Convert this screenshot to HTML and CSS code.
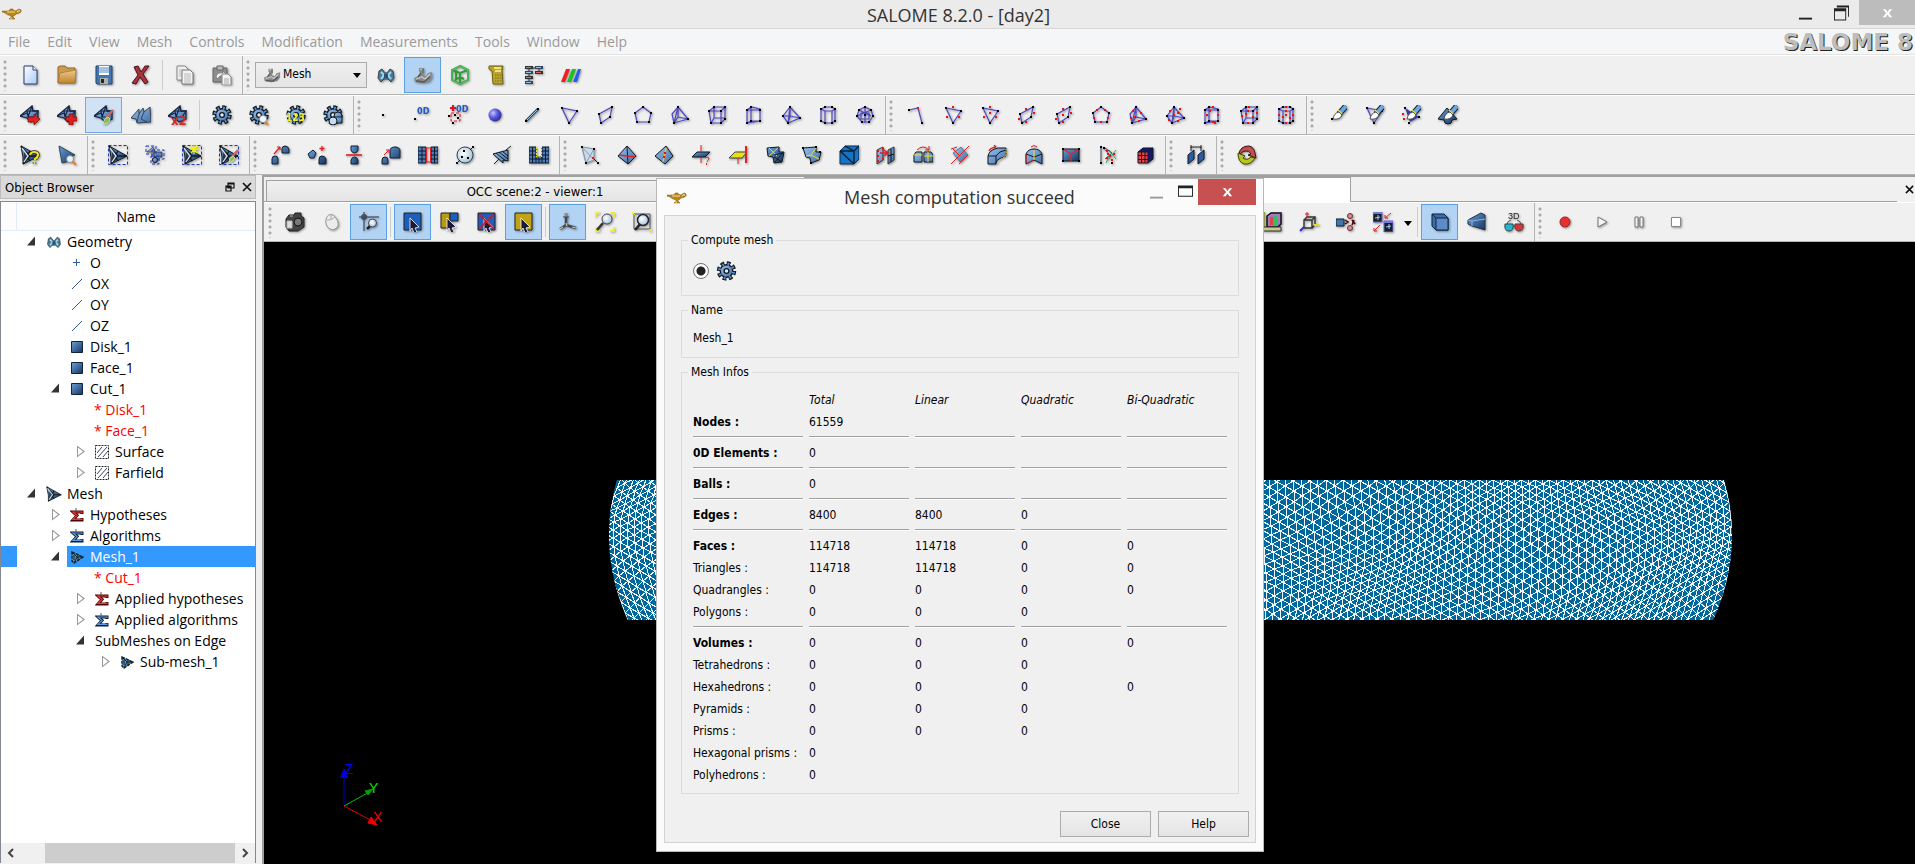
FILE: index.html
```html
<!DOCTYPE html>
<html lang="en">
<head>
<meta charset="utf-8">
<title>SALOME 8.2.0 - [day2]</title>
<link rel="stylesheet" href="styles.css">
</head>
<body>
<svg class="defs" aria-hidden="true">
  <defs>
    <linearGradient id="steel" x1="0" y1="0" x2="1" y2="1"><stop offset="0" stop-color="#9cc2ee"/><stop offset="1" stop-color="#3f6ea8"/></linearGradient>
    <linearGradient id="deep" x1="0" y1="0" x2="1" y2="1"><stop offset="0" stop-color="#6ba0dc"/><stop offset="1" stop-color="#16345c"/></linearGradient>
    <linearGradient id="paper" x1="0" y1="0" x2="1" y2="1"><stop offset="0" stop-color="#fff"/><stop offset="1" stop-color="#a9c9f7"/></linearGradient>
    <linearGradient id="wood" x1="0" y1="0" x2="0" y2="1"><stop offset="0" stop-color="#f0c88a"/><stop offset="1" stop-color="#c08430"/></linearGradient>
    <radialGradient id="orb" cx=".35" cy=".35" r=".7"><stop offset="0" stop-color="#c8c8ff"/><stop offset=".5" stop-color="#5a5ae0"/><stop offset="1" stop-color="#2a2a90"/></radialGradient>
    <radialGradient id="glass" cx=".4" cy=".4" r=".6"><stop offset="0" stop-color="#fff"/><stop offset="1" stop-color="#a8c8d8"/></radialGradient>
  </defs>
  <symbol id="lamp" viewBox="0 0 20 12"><path d="M0 3h5q2 0 3-1V1h3v1l3 1q2-2 4-2 2 1 1 3-2 2-5 2-1 2-3 2v1l2 2H7l2-2V8Q5 7 3 5L0 4z" fill="#b8841c" stroke="#7c5a14" stroke-width=".5"/><path d="M5 4h8M9 9v2" stroke="#ffe28a"/><path d="M15 4q2-2 3-1" stroke="#f4f0dc" fill="none"/></symbol>
  <symbol id="new" viewBox="0 0 20 20"><path d="M4 1h9l4 4v14H4z" fill="url(#paper)" stroke="#24406e"/><path d="M13 1v4h4" fill="#fff" stroke="#24406e"/></symbol>
  <symbol id="open" viewBox="0 0 20 20"><path d="M1 2l2-1h5l2 2h8v15H1z" fill="#c99a52" stroke="#9b6a22"/><path d="M3 8l16-3-1 13H1z" fill="url(#wood)" stroke="#a67328" stroke-width=".7"/></symbol>
  <symbol id="save" viewBox="0 0 20 20"><path d="M2 1h16v18H3l-1-1z" fill="#4375ae" stroke="#23466f"/><path d="M5 1h10v9H5z" fill="#fff"/><path d="M5 3h10M5 5h10M5 7h10" stroke="#4a83c6"/><path d="M6 13h8v6H6z" fill="#b5b0a0"/><path d="M7 14h3v4H7z" fill="#222"/></symbol>
  <symbol id="del" viewBox="0 0 20 20"><path d="M3 2l4-1 3 6 4-6h4l-6 8 5 8-3 2-5-7-4 7-4-1 6-8z" fill="#a8323e" stroke="#4d1016"/></symbol>
  <symbol id="copy" viewBox="0 0 20 20"><path d="M2 1h8l3 3v11H2z" fill="#eee" stroke="#888"/><path d="M7 5h8l3 3v11H7z" fill="#f4f4f4" stroke="#777"/><path d="M9 9h7M9 11h7M9 13h7M9 15h7M9 17h7M4 5h3M4 7h3M4 9h3M4 11h3" stroke="#aaa" stroke-width=".8"/></symbol>
  <symbol id="paste" viewBox="0 0 20 20"><path d="M1 3h14v14H1z" fill="#8c8c8c" stroke="#666"/><path d="M5 1h6v4H5z" fill="#bbb" stroke="#666"/><path d="M4 12q1-5 7-4V6l4 4-4 4v-3q-4-1-5 3z" fill="#eee" stroke="#666" stroke-width=".6"/><path d="M10 9h6l3 3v8h-9z" fill="#f2f2f2" stroke="#888"/><path d="M12 14h5M12 16h5M12 18h5" stroke="#aaa"/></symbol>
  <symbol id="mod" viewBox="0 0 20 20"><path d="M6 3h5v4l-1 3 3 1 2-3 4-1v6l-3 4-7 1-7-1-1-4 4-2 3-2-2-3z" fill="#8a8a8a"/><path d="M7 4l3 1v3M3 14l6-2 3 2 5-5" stroke="#c8c8c8" stroke-width="1.300" fill="none"/><path d="M8 8l-3 4M10 4v4M3 16l8 1 6-5" stroke="#555" stroke-width="1.300" fill="none"/></symbol>
  <symbol id="geo" viewBox="0 0 20 20"><path d="M3 6l3-2 3 4h2l3-4 3 2 1 7-3 4-3-3H8l-3 3-3-4z" fill="#477c9c" stroke="#444"/><path d="M5 7l3 3-3 4M15 7l-3 3 3 4" stroke="#9fd8ec" stroke-width="2" fill="none"/><path d="M8 9h4v4H8z" fill="#28507a"/></symbol>
  <symbol id="cube" viewBox="0 0 20 20"><path d="M10 1l8 4v10l-8 4-8-4V5zM2 5l8 3 8-3M10 8v11M5 15l5-3 4 2M6 5v10" fill="none" stroke="#2f9c3a" stroke-width="2"/><path d="M10 1l8 4v10l-8 4-8-4V5z" fill="none" stroke="#7ad884" stroke-width=".7"/></symbol>
  <symbol id="calc" viewBox="0 0 20 20"><path d="M2 1h14l-1 4 1 14H6L5 6 2 4z" fill="#b9a52c" stroke="#6e6012"/><path d="M7 3h7M8 6h6" stroke="#f3e27a" stroke-width="2"/><path d="M8 10h7M8 13h7M8 16h7" stroke="#7a6a18" stroke-dasharray="1.500 1"/></symbol>
  <symbol id="flow" viewBox="0 0 20 20"><path d="M7 3h5M5 4v14M15 4v5" stroke="#333"/><path d="M1 1h8v3H1zM11 6h8v3h-8zM1 11h8v3H1z" fill="#333" /><path d="M11 1h8v3h-8zM1 6h8v3H1zM1 16h8v3H1z" fill="#2f4866"/><path d="M2 2.500h5M12 7.500h5M2 12.500h5" stroke="#d66"/><path d="M12 2.500h5M2 7.500h5M2 17.500h5" stroke="#8cc4f0"/></symbol>
  <symbol id="rgb" viewBox="0 0 20 20"><path d="M0 17L5 4h4L4 17z" fill="#f02020"/><path d="M6 17l5-13h4l-5 13z" fill="#20c020"/><path d="M12 17l5-13h3l-4 13z" fill="#2060f0"/></symbol>
  <symbol id="base" viewBox="0 0 20 20"><path d="M0 11L12 1l1 5h5v8l-7 3-4-4z" fill="url(#steel)" stroke="#142440" stroke-width="1.300"/><path d="M7 6h11l-4 6H8zM0 11l7-3M12 1L8 12" fill="none" stroke="#142440" stroke-width="1.200"/></symbol>
  <symbol id="m1" viewBox="0 0 20 20"><use href="#base"/><path d="M8 12h6V9l6 5-6 6v-3H8z" fill="#e02020" stroke="#701010" stroke-width=".7"/></symbol>
  <symbol id="m2" viewBox="0 0 20 20"><use href="#base"/><path d="M12 9h4v3h4v4h-4v4h-4v-4H9v-4h3z" fill="#e02020" stroke="#701010" stroke-width=".7"/></symbol>
  <symbol id="m3" viewBox="0 0 20 20"><use href="#base"/><path d="M19 5l-7 8" stroke="#c86464" stroke-width="2.500"/><path d="M14 12q-4 1-5 7 6 0 7-5z" fill="#8cbc48" stroke="#dfe8b8" stroke-width=".8"/></symbol>
  <symbol id="m4" viewBox="0 0 20 20"><path d="M0 13l8-9v5l4-6 1 4 6-5 1 15-14 1-1-4z" fill="url(#steel)" stroke="#345"/><path d="M8 9l-2 8M13 7l-3 7 6 3" fill="none" stroke="#345"/></symbol>
  <symbol id="gear" viewBox="0 0 20 20"><circle cx="10" cy="10" r="7.500" fill="none" stroke="#101820" stroke-width="4.500" stroke-dasharray="3.600 2.290"/><circle cx="10" cy="10" r="6.300" fill="url(#steel)" stroke="#101820" stroke-width="1.400"/><circle cx="10" cy="10" r="7" fill="none" stroke="#5d91cc" stroke-width="3" stroke-dasharray="1.600 3.898" stroke-dashoffset="-.9"/><circle cx="10" cy="10" r="2.400" fill="#e8e8e8" stroke="#101820" stroke-width="1.300"/></symbol>
  <symbol id="g2" viewBox="0 0 20 20"><use href="#gear"/><path d="M15 16l4 4" stroke="#e08030" stroke-width="2"/><circle cx="14" cy="14" r="3.500" fill="#f2f8ff" stroke="#888" stroke-width=".6"/></symbol>
  <symbol id="g4" viewBox="0 0 20 20"><use href="#gear"/><circle cx="15" cy="11" r="4" fill="url(#steel)" stroke="#101820"/><path d="M11 12h8v6h-8z" fill="url(#steel)" stroke="#101820"/><circle cx="10" cy="16" r="4" fill="#c4dcf6" stroke="#101820"/></symbol>
  <symbol id="w0" viewBox="0 0 20 20"><path class="k" d="M9 10h0"/></symbol>
  <symbol id="w3" viewBox="0 0 20 20"><circle cx="10" cy="10" r="6.500" fill="url(#orb)"/></symbol>
  <symbol id="w4" viewBox="0 0 20 20"><path d="M4 16L16 4" stroke="#345" stroke-width="2.500"/><path d="M4 16L16 4" stroke="#9cf"/><path class="k" d="M4 16h0M16 4h0"/></symbol>
  <symbol id="w5" viewBox="0 0 20 20"><path class="w" d="M3 3l15 3-8 12z"/><path class="k" d="M3 3h0M18 6h0M10 18h0"/></symbol>
  <symbol id="w6" viewBox="0 0 20 20"><path class="w" d="M3 9l13-7-2 10-9 6z"/><path class="k" d="M3 9h0M16 2h0M14 12h0M5 18h0"/></symbol>
  <symbol id="w7" viewBox="0 0 20 20"><path class="w" d="M10 2l8 6-2 9H4L2 8z"/><path class="k" d="M10 2h0M18 8h0M16 17h0M4 17h0M2 8h0"/></symbol>
  <symbol id="w8" viewBox="0 0 20 20"><path class="w" d="M8 2l10 12L4 18zM4 18L2 9l6-7v10l10 2M4 18l4-6"/><path class="k" d="M8 2h0M18 14h0M4 18h0"/></symbol>
  <symbol id="w9" viewBox="0 0 20 20"><path class="w" d="M2 6h12v12H4zM2 6l5-4h11l-4 4M18 2v12l-4 4M7 2v11l-3 5M7 13h11"/><path class="k" d="M2 6h0M14 6h0M14 18h0M4 18h0M7 2h0M18 2h0M18 14h0"/></symbol>
  <symbol id="w10" viewBox="0 0 20 20"><path class="w" d="M3 5l4-3 9 2v12H7l-4 2zM7 2v14M3 5h13M3 18l13-2"/><path class="k" d="M3 5h0M7 2h0M16 5h0M16 16h0M7 16h0M3 18h0"/></symbol>
  <symbol id="w11" viewBox="0 0 20 20"><path class="w" d="M9 2L2 11l5 7 12-5zM9 2v9M2 11l7 0 10 2M7 18l2-7M9 2l-2 16"/><path class="k" d="M9 2h0M2 11h0M7 18h0M19 13h0"/></symbol>
  <symbol id="w12" viewBox="0 0 20 20"><path class="w" d="M3 4l4-2h7l3 2v12l-3 2H7l-4-2zM7 6h7v12H7zM3 4l4 2M17 4l-3 2"/><path class="k" d="M3 4h0M7 2h0M14 2h0M17 4h0M3 16h0M7 18h0M14 18h0M17 16h0"/></symbol>
  <symbol id="w13" viewBox="0 0 20 20"><path class="w" d="M10 2l6 3 2 6-4 6H7l-5-6 2-6zM10 2v16M4 5l12 6M16 5L2 11M6 8h8v6H6z"/><path class="k" d="M10 2h0M16 5h0M18 11h0M14 17h0M7 17h0M2 11h0M4 5h0M10 10h0"/></symbol>
  <symbol id="q0" viewBox="0 0 20 20"><path class="w" d="M3 5l9-2 4 15"/><path class="k" d="M3 5h0M16 18h0"/><path class="r" d="M12 3h0"/></symbol>
  <symbol id="q1" viewBox="0 0 20 20"><use href="#w5"/><path class="r" d="M10 2h0M16 12h0M4 12h0"/></symbol>
  <symbol id="q2" viewBox="0 0 20 20"><use href="#w5"/><path class="r" d="M10 2h0M16 12h0M4 12h0M10 8h0"/></symbol>
  <symbol id="q3" viewBox="0 0 20 20"><use href="#w6"/><path class="r" d="M9 4h0M17 8h0M9 17h0M2 14h0"/></symbol>
  <symbol id="q4" viewBox="0 0 20 20"><use href="#w6"/><path class="r" d="M9 4h0M17 8h0M9 17h0M2 14h0M9 10h0"/></symbol>
  <symbol id="q5" viewBox="0 0 20 20"><use href="#w7"/><path class="r" d="M14 5h0M17 13h0M10 17h0M3 13h0M6 5h0"/></symbol>
  <symbol id="q6" viewBox="0 0 20 20"><use href="#w8"/><path class="r" d="M5 6h0M13 8h0M11 16h0M3 13h0M7 12h0"/></symbol>
  <symbol id="q7" viewBox="0 0 20 20"><use href="#w11"/><path class="r" d="M5 6h0M13 8h0M13 16h0M4 15h0M9 10h0M15 4h0"/></symbol>
  <symbol id="q8" viewBox="0 0 20 20"><use href="#w10"/><path class="r" d="M11 2h0M5 10h0M16 10h0M11 17h0M8 6h0M13 18h0"/></symbol>
  <symbol id="q9" viewBox="0 0 20 20"><use href="#w9"/><path class="r" d="M10 2h0M3 11h0M9 6h0M18 8h0M9 18h0M14 12h0M7 9h0"/></symbol>
  <symbol id="q10" viewBox="0 0 20 20"><use href="#w12"/><path class="r" d="M10 2h0M3 10h0M17 10h0M10 18h0M10 6h0M7 12h0M14 13h0M10 10h0"/></symbol>
  <symbol id="brush" viewBox="0 0 20 20"><path d="M19 1l-7 8" stroke="#10243c" stroke-width="6"/><path d="M19 1l-7 8" stroke="#6ea6e0" stroke-width="4"/><path d="M11 5l4 4" stroke="#e0e040" stroke-width="1.500"/><path d="M6 14q1-6 6-7l3 3q-2 5-9 4z" fill="#fff" stroke="#333" stroke-width=".8"/></symbol>
  <symbol id="b0" viewBox="0 0 20 20"><use href="#brush"/><path class="k" d="M5 14h0"/></symbol>
  <symbol id="b1" viewBox="0 0 20 20"><use href="#w5"/><use href="#brush"/></symbol>
  <symbol id="b2" viewBox="0 0 20 20"><path d="M4 3l14 9-9 5z" fill="#3c3ca8"/><use href="#brush"/><path class="k" d="M4 3h0M18 12h0M8 18h0"/><path class="r" d="M2 9h0M3 14h0"/></symbol>
  <symbol id="b3" viewBox="0 0 20 20"><path d="M0 14l9-11 10 11-5 1q0 4-4 4t-4-4z" fill="url(#deep)" stroke="#101820"/><use href="#brush"/></symbol>
  <symbol id="arrow" viewBox="0 0 20 20"><path d="M1 1l18 10-16 8V12z" fill="url(#deep)" stroke="#101820"/><path d="M1 1l9 10-7 8M10 11h9M5 7v9M10 6l-3 5 3 5" fill="none" stroke="#101820" stroke-width="1.300"/><path d="M2 3l6 8-4 6" stroke="#ddd" stroke-width="1.300" fill="none"/></symbol>
  <symbol id="a1" viewBox="0 0 20 20"><use href="#arrow"/><path d="M10 10q1-3 4-3 4 0 4 3 0 2-3 4v1M14.500 17v2" fill="none" stroke="#222" stroke-width="3.500"/><path d="M10 10q1-3 4-3 4 0 4 3 0 2-3 4v1M14.500 17v2" fill="none" stroke="#f0e020" stroke-width="2.200"/></symbol>
  <symbol id="a2" viewBox="0 0 20 20"><path d="M2 1l16 9-6 2 1 4-8 2z" fill="url(#deep)" stroke="#345"/><path d="M15 16l4 4" stroke="#e08030" stroke-width="2"/><circle cx="13" cy="14" r="3.500" fill="#e6f2fc" stroke="#777" stroke-width=".7"/></symbol>
  <symbol id="s1" viewBox="0 0 20 20"><path class="sel b1" d="M.5.5h19v19H.5z"/><use href="#arrow"/></symbol>
  <symbol id="s2" viewBox="0 0 20 20"><path d="M2 7l6-5 2 5zM9 7h8v5H9z" fill="url(#steel)" stroke="#112" stroke-width=".6"/><path class="sel b1" d="M1 1h10v8H1zM7 5h12v9H7zM6 11h8v8H6z"/><circle cx="10" cy="15" r="2.500" fill="url(#steel)" stroke="#111"/></symbol>
  <symbol id="s3" viewBox="0 0 20 20"><use href="#s1"/><path d="M12 0v9M8 4h9M9 1l6 7M15 1l-6 7" stroke="#f0f020" stroke-width="1.300"/></symbol>
  <symbol id="s4" viewBox="0 0 20 20"><use href="#s1"/><path d="M19 5l-7 8" stroke="#c86464" stroke-width="2.500"/><path d="M14 11q-4 1-4 6 5 0 6-4z" fill="#8cbc48" stroke="#dfe8b8" stroke-width=".8"/></symbol>
  <symbol id="t1" viewBox="0 0 20 20"><path d="M2 19v-5q0-3 3-3t3 3v5zM12 8V4q0-3 3-3t4 3v4z" fill="url(#deep)" stroke="#0e2038"/><path d="M4 9l6-7M10 2H7M10 2v3" stroke="#e02020" stroke-width="1.200"/></symbol>
  <symbol id="t2" viewBox="0 0 20 20"><path d="M1 9l5-4 3 3-2 5H3zM12 19v-5q0-3 3-3t4 3v5z" fill="url(#deep)" stroke="#0e2038"/><path d="M15 1v5M12.500 3.500h5" stroke="#e02020" stroke-width="1.300"/></symbol>
  <symbol id="t3" viewBox="0 0 20 20"><path d="M7 1h7v4q-1 3-3.500 3T7 5zM7 19v-4q1-3 3.500-3t3.500 3v4z" fill="url(#deep)" stroke="#0e2038"/><path d="M2 10h16" stroke="#e02020" stroke-width="1.600"/></symbol>
  <symbol id="t4" viewBox="0 0 20 20"><path d="M1 19v-4q0-3 3-3t3 3v4zM9 13V6q0-4 5-4t5 4v7z" fill="url(#deep)" stroke="#0e2038"/><path d="M3 10l5-5M8 5H5M8 5v3" stroke="#e02020"/></symbol>
  <symbol id="t5" viewBox="0 0 20 20"><path d="M0 2h8v16H0zM13 2h7v16h-7z" fill="#4d7db8"/><path class="gridl" d="M0 2h8v16H0zM13 2h7v16h-7zM0 6h8M0 10h8M0 14h8M13 6h7M13 10h7M13 14h7M4 2v16M16.500 2v16"/><path d="M8 3h5M8 17h5M8.500 3v14M12.500 3v14" stroke="#e02020"/></symbol>
  <symbol id="t6" viewBox="0 0 20 20"><circle cx="10" cy="10" r="8" fill="url(#glass)" stroke="#345"/><path class="k" d="M9 6h0M7 12h0M13 13h0M18 2h0M2 18h0"/><path d="M15 5l4-4M1 19l4-4" stroke="#111"/></symbol>
  <symbol id="t7" viewBox="0 0 20 20"><path d="M1 9l15-4v11l-5-1v3z" fill="url(#steel)" stroke="#101820"/><path d="M4 8l10 8M7 7l9 7M10 6l6 5M14 5l5-4M2 19l5-5" stroke="#101820"/></symbol>
  <symbol id="t8" viewBox="0 0 20 20"><path d="M0 2h7v10h6V2h7v16H0z" fill="#4d7db8"/><path class="gridl" d="M0 2h7v10h6V2h7v16H0zM0 6h7M0 10h7M0 14h20M13 6h7M13 10h7M3.500 2v16M7 12v6M10 12v6M13 12v6M16.500 2v16"/><path d="M7.500 2v10h5V2" fill="none" stroke="#f0e020" stroke-dasharray="2 1"/></symbol>
  <symbol id="e0" viewBox="0 0 20 20"><path d="M2 2l12 2 0 11-8 3zM2 2l12 13M14 4L6 18M2 2l4 16" fill="#c8dcec" stroke="#8898a8"/><path class="k" d="M2 2h0M14 4h0M6 18h0M18 18h0"/><path d="M14 14l4 4" stroke="#111"/><path class="r" d="M13 13h0"/></symbol>
  <symbol id="e1" viewBox="0 0 20 20"><path d="M10 1l9 10-8 8-10-8z" fill="url(#steel)" stroke="#101820"/><path d="M10 1l1 18" stroke="#101820"/><path d="M2 10l16 2" stroke="#e02020" stroke-width="1.500"/></symbol>
  <symbol id="e2" viewBox="0 0 20 20"><path d="M12 1l7 10-8 8-10-8z" fill="url(#steel)" stroke="#101820"/><path d="M12 3L9 17" stroke="#f0c020" stroke-width="1.500"/><path class="r" d="M11 8h0M10 12h0"/></symbol>
  <symbol id="e3" viewBox="0 0 20 20"><path d="M6 7h13l-5 5H1z" fill="url(#deep)" stroke="#101820"/><path d="M10 0v7M10 12v6M14 13q4-2 4 1-2 2-2 3M15.500 18v2" fill="none" stroke="#e02020"/></symbol>
  <symbol id="e4" viewBox="0 0 20 20"><path d="M7 7h12l-5 6H1z" fill="#e8e010" stroke="#444"/><path d="M18 1v17" stroke="#e02020" stroke-width="2"/><path d="M10 13v6" stroke="#e02020"/></symbol>
  <symbol id="e5" viewBox="0 0 20 20"><path d="M2 3l12-1 0 5 5 0-2 10-8 1-1-6-5-1z" fill="url(#deep)" stroke="#101820"/><path d="M4 3l8 8M13 3L4 11" stroke="#f0e020"/><path d="M9 12l8 5M18 8l-8 9M9 10l9-2" stroke="#101820"/></symbol>
  <symbol id="e6" viewBox="0 0 20 20"><path d="M1 3l13-1 0 5 5 0-2 8-8 3-1-5-4-1z" fill="url(#steel)" stroke="#101820"/><path d="M14 3l-5 7-5 1M9 10l8 4" stroke="#f0e020" fill="none"/><path class="k" d="M1 3h0M14 2h0M9 18h0M18 7h0"/></symbol>
  <symbol id="e7" viewBox="0 0 20 20"><path d="M1 6l5-5h14v13l-5 5H1z" fill="#1672c4" stroke="#0a2a50"/><path d="M1 6h14v13M15 6l5-5M1 6l14 13M6 1l9 5" fill="none" stroke="#0a2030" stroke-width="1.400"/></symbol>
  <symbol id="e8" viewBox="0 0 20 20"><path d="M1 5l6-3v13l-6 4zM12 5l6-3v13l-6 4z" fill="url(#steel)" stroke="#333"/><path d="M12 11l6-2M15 4v13" stroke="#111"/><path d="M4 8h7M8 5l4 3-4 3" stroke="#e02020" stroke-width="1.500" fill="none"/><path class="r" d="M2 6h0M2 11h0M2 16h0M7 4h0M7 14h0"/></symbol>
  <symbol id="e9" viewBox="0 0 20 20"><path d="M1 10l2-3h6v10H1zM11 7h7l2 3v7h-9z" fill="url(#steel)" stroke="#101820"/><path d="M1 10h8M11 11h9M15 7v10" stroke="#f0e020"/><path d="M4 5q6-6 12 0M16 5V1M16 5h-4" fill="none" stroke="#e02020"/></symbol>
  <symbol id="e10" viewBox="0 0 20 20"><path d="M3 8l8-6 7 8-8 7z" fill="url(#steel)" stroke="#678"/><path d="M1 19L19 1M2 3l8 8M9 19l9-9M1 4l6-2" stroke="#e02020" fill="none"/></symbol>
  <symbol id="e11" viewBox="0 0 20 20"><path d="M1 11q1-6 10-8h8v8l-7 3q-3 1-3 5H1z" fill="url(#steel)" stroke="#101820"/><path d="M1 11h8v8M9 11q3-5 10-6" fill="none" stroke="#101820"/><path d="M10 19q1-4 9-8V4" fill="none" stroke="#f0e020" stroke-dasharray="2 1"/><path d="M2 6q1-3 7-4M9 2L7 0" fill="none" stroke="#e02020" stroke-width="1.400"/></symbol>
  <symbol id="e12" viewBox="0 0 20 20"><path d="M2 19V9q2-5 8-5t8 5v10l-8-4z" fill="url(#steel)" stroke="#101820"/><path d="M2 9l8 3 8-3" fill="none" stroke="#101820"/><path d="M10 5v10" stroke="#f0e020"/><path d="M7 2q3-3 6 0M2 18V9M3 19l6-4" fill="none" stroke="#e02020"/></symbol>
  <symbol id="e13" viewBox="0 0 20 20"><path d="M2 4h16v12H2z" fill="url(#deep)" stroke="#101820"/><path d="M2 4l8 5 8-5M10 9v7" fill="none" stroke="#f02020" stroke-width="1.200"/><path class="k" d="M2 4h0M18 4h0M2 16h0M18 16h0"/></symbol>
  <symbol id="e14" viewBox="0 0 20 20"><path d="M3 2v16M7 3l7 5-7 6" stroke="#346" fill="none"/><path d="M5 3l7 7-4 8M11 5l7 9M18 5l-7 9" stroke="#3a5" fill="none"/><path class="r" d="M9 6h0M10 9h0M9 13h0M12 11h0M14 15h0M16 9h0"/><path class="k" d="M3 2h0M3 18h0M6 3h0M14 18h0"/></symbol>
  <symbol id="e15" viewBox="0 0 20 20"><path d="M3 7l5-4h10v11l-5 4H3z" fill="#18186a"/><path d="M3 7h10v11H3z" fill="#e84040"/><path class="gridl" d="M3 7h10v11H3zM3 10.500h10M3 14.500h10M6.500 7v11M10 7v11M3 7l5-4h10l-5 4M18 3v11l-5 4"/></symbol>
  <symbol id="z1" viewBox="0 0 20 20"><path d="M2 10l6-5v9l-6 5zM12 10l6-5v9l-6 5z" fill="#2d5aa0" stroke="#101820"/><path d="M5 6V2h10v4" fill="none" stroke="#222"/><path d="M5 0v3M15 0v3" stroke="#222"/></symbol>
  <symbol id="z2" viewBox="0 0 20 20"><path d="M2 9q1-8 10-8 5 1 6 7l1 5-8-3 3-1q-2-4-6-3-3 1-5 3z" fill="#c05050" stroke="#401010"/><path d="M1 8l7 3-2 2q4 3 8-1l4 1q-4 7-11 6-6-2-6-11z" fill="#b8c818" stroke="#3c4408"/></symbol>
  <symbol id="v1" viewBox="0 0 20 20"><path d="M4 3h5l1-2h6v3l3 2v9l-6 4H4l-3-4V7z" fill="#444" stroke="#222"/><circle cx="13" cy="10" r="4" fill="#777" stroke="#111"/><path d="M2 9h5v7H2zM5 4h3" fill="#ddd" stroke="#bbb"/></symbol>
  <symbol id="v2" viewBox="0 0 20 20"><path d="M4 7q2-6 7-4 6 5 5 11-3 5-8 3-5-3-4-10z" fill="#ececec" stroke="#999"/><path d="M5 8q4 1 8-3M9 3v4" stroke="#aaa" fill="none"/></symbol>
  <symbol id="v3" viewBox="0 0 20 20"><path d="M0 5h20M5 0v19M3 3h4v4H3z" stroke="#333" fill="none"/><path d="M8 17l3-3" stroke="#222" stroke-width="2.500"/><circle cx="13.500" cy="11" r="4" fill="url(#glass)" stroke="#445"/></symbol>
  <symbol id="cur" viewBox="0 0 20 20"><path d="M7 6l9 9-4 1 2 4-3 1-2-5-2 3z" fill="#1a1a3a" stroke="#fff" stroke-width=".8"/></symbol>
  <symbol id="v4" viewBox="0 0 20 20"><path d="M1 1h17v17H1z" fill="#1d5fbe" stroke="#222"/><use href="#cur"/></symbol>
  <symbol id="v5" viewBox="0 0 20 20"><path d="M1 1h9v15H1z" fill="#b89a18" stroke="#222"/><path d="M10 1h8v8h-8z" fill="#1d5fbe" stroke="#222"/><use href="#cur"/></symbol>
  <symbol id="v6" viewBox="0 0 20 20"><path d="M1 1h17v17H1z" fill="#1d5fbe" stroke="#222"/><use href="#cur"/><path d="M2 2l15 15M17 2L2 17" stroke="#e01020" stroke-width="1.500"/></symbol>
  <symbol id="v7" viewBox="0 0 20 20"><path d="M1 1h17v17H1z" fill="#c0a414" stroke="#222"/><use href="#cur"/></symbol>
  <symbol id="v8" viewBox="0 0 20 20"><path d="M8 1v12L2 17M8 13l10 3" stroke="#445" stroke-width="2.500" fill="none"/><path d="M8 1v4M2 17l3-2M18 16l-4-1M8 11l1 3" stroke="#c4c49a" stroke-width="1.200"/><path d="M5 5h6" stroke="#445"/></symbol>
  <symbol id="v9" viewBox="0 0 20 20"><path d="M1 5V1h4M15 1h4v4M1 15v4h4M15 19h4v-4" stroke="#f4f41a" stroke-width="1.400" fill="none"/><path d="M2 18l6-7" stroke="#333" stroke-width="2.500"/><circle cx="12" cy="7" r="5" fill="url(#glass)" stroke="#445"/></symbol>
  <symbol id="v10" viewBox="0 0 20 20"><path d="M2 2h16v15H2z" fill="none" stroke="#555"/><path d="M3 18l6-7" stroke="#222" stroke-width="2.500"/><circle cx="11" cy="8" r="5.500" fill="url(#glass)" stroke="#223" stroke-width="1.500"/><path d="M0 0l3 3M17 17l3 3M20 17l-3 3" stroke="#f4f41a"/></symbol>
  <symbol id="v11" viewBox="0 0 20 20"><path d="M2 0v16" stroke="#8a9a48" stroke-width="2"/><path d="M5 4l4-3h10v11l-3 3H5z" fill="#a878c0" stroke="#111" stroke-width="1.500"/><path d="M8 5h3v8H8z" fill="#d44"/><path d="M11 4h4v9h-4z" fill="#3b6"/><path d="M1 15h18v4H1z" fill="#c8c890" stroke="#333"/></symbol>
  <symbol id="v12" viewBox="0 0 20 20"><path d="M5 8h8v8H5zM5 8l3-3h8v8l-3 3M13 8l3-3" fill="none" stroke="#333" stroke-width="1.400"/><path d="M8 5V0M6 2h4" stroke="#e02020"/><path d="M5 15l-4 4" stroke="#3030e0" stroke-width="2"/><path d="M15 13h5" stroke="#e0e020" stroke-width="2"/></symbol>
  <symbol id="v13" viewBox="0 0 20 20"><path d="M0 7h8v7H0z" fill="#3f75a8" stroke="#123"/><circle cx="14" cy="4" r="2.500" fill="#d88" stroke="#633"/><circle cx="14" cy="16" r="2.500" fill="#d88" stroke="#633"/><path d="M9 8l3 2-3 2M16 8l3 4M18 8l-2 5" stroke="#400" stroke-width="1.500" fill="none"/></symbol>
  <symbol id="v14" viewBox="0 0 20 20"><path d="M0 0h9v10H0zM11 9h9v11h-9z" fill="#14202e" stroke="#66c"/><path d="M0 1h9M11 10h9" stroke="#77d" stroke-width="2"/><path d="M2 6l5-1M5 3v5M13 15l5-1M16 12v5" stroke="#acf"/><path d="M12 6l6-5M1 19l6-6M12 3v3h3M1 16v3h3" stroke="#e02020" fill="none"/></symbol>
  <symbol id="v15" viewBox="0 0 20 20"><path d="M2 2h12l4 4v12H6l-4-4z" fill="#3c6cac" stroke="#10243c"/><path d="M6 6h12v12H6zM2 2l4 4" fill="#5c8cc8" stroke="#10243c"/></symbol>
  <symbol id="v16" viewBox="0 0 20 20"><path d="M1 8l13-7 4 2v15L5 14l-4-2z" fill="url(#deep)" stroke="#234"/><path d="M1 8l4 1 13-2M5 9v5" fill="none" stroke="#8ab4e4"/></symbol>
  <symbol id="rec" viewBox="0 0 20 20"><circle cx="10" cy="10" r="5" fill="#e83030" stroke="#922"/></symbol>
  <symbol id="play" viewBox="0 0 20 20"><path d="M6 5l9 5-9 5z" fill="#f4f4f4" stroke="#777"/></symbol>
  <symbol id="pause" viewBox="0 0 20 20"><path d="M6 5h3v10H6zM11 5h3v10h-3z" fill="#f4f4f4" stroke="#777"/></symbol>
  <symbol id="stop" viewBox="0 0 20 20"><path d="M5.500 5.500h9v9h-9z" fill="#fff" stroke="#888"/></symbol>
  <symbol id="plus" viewBox="0 0 14 14"><path d="M6.500 3v7M3 6.500h7" stroke="#2d5aa0"/></symbol>
  <symbol id="line" viewBox="0 0 14 14"><path d="M2 12L12 2" stroke="#2d5a90"/></symbol>
  <symbol id="face" viewBox="0 0 14 14"><path d="M1.500 1.500h11v11h-11z" fill="url(#deep)" stroke="#10243c"/></symbol>
  <symbol id="grp" viewBox="0 0 14 14"><path d="M.5.500h13v13H.5z" fill="none" stroke="#222" stroke-dasharray="2 1"/><path d="M2 8l5-6M3 12l9-10M8 12l5-6" stroke="#346"/></symbol>
  <symbol id="hyp" viewBox="0 0 14 14"><path d="M12 6V4H3l4 3.500L3 12h9v-2" fill="none" stroke="#500" stroke-width="3"/><path d="M12 5V4H3l4 3.500L3 11.500h9v-1" fill="none" stroke="#e04040" stroke-width="1.200"/><path d="M6 3V0" stroke="#555"/></symbol>
  <symbol id="alg" viewBox="0 0 14 14"><path d="M12 6V4H3l4 3.500L3 12h9v-2" fill="none" stroke="#0c1c34" stroke-width="3"/><path d="M12 5V4H3l4 3.500L3 11.500h9v-1" fill="none" stroke="#5c9ce0" stroke-width="1.200"/><path d="M6 3V0" stroke="#555"/></symbol>
  <symbol id="msh" viewBox="0 0 14 14"><path d="M2 2l11 5-9 6-2-2z" fill="#5d91cc" stroke="#122" stroke-width="1.400" stroke-dasharray="3 1"/><path d="M2 2l5 5-3 6M7 7h6M8 4v7M4 5v5" stroke="#122" fill="none"/></symbol>
  <symbol id="down" viewBox="0 0 10 6"><path d="M0 0h10L5 6z"/></symbol>
</svg>

<header class="titlebar">
  <svg class="lamp"><use href="#lamp"/></svg>
  <h1>SALOME 8.2.0 - [day2]</h1>
  <div class="winbtns">
    <button class="wmin" aria-label="Minimize"><svg viewBox="0 0 16 16"><path d="M1 13h14v2H1z"/></svg></button>
    <button class="wmax" aria-label="Restore"><svg viewBox="0 0 16 16"><path d="M3 0h13v12h-1V2H3zM0 3h13v13H0zM1 6v9h11V6z" fill-rule="evenodd"/></svg></button>
    <button class="wclose" aria-label="Close window"><svg viewBox="0 0 16 16"><path d="M3 4h3l2 3 2-3h3L9.500 8l3.500 4.500h-3L8 9.500 6 12.500H3L6.500 8z"/></svg></button>
  </div>
</header>
<nav class="menubar">
  <button>File</button><button>Edit</button><button>View</button><button>Mesh</button><button>Controls</button><button>Modification</button><button>Measurements</button><button>Tools</button><button>Window</button><button>Help</button>
  <span class="logo">SALOME 8</span>
</nav>

<div class="toolrow">
  <div class="group"><i class="grip"></i>
    <button class="tool" aria-label="New"><svg><use href="#new"/></svg></button>
    <button class="tool" aria-label="Open"><svg><use href="#open"/></svg></button>
    <button class="tool" aria-label="Save"><svg><use href="#save"/></svg></button>
    <button class="tool" aria-label="Delete"><svg><use href="#del"/></svg></button>
    <i class="sep"></i>
    <button class="tool" aria-label="Copy"><svg><use href="#copy"/></svg></button>
    <button class="tool" aria-label="Paste"><svg><use href="#paste"/></svg></button>
  </div>
  <div class="group last"><i class="grip"></i>
    <label class="combo"><svg><use href="#mod"/></svg><select aria-label="Module"><option>Mesh</option></select><svg class="caret"><use href="#down"/></svg></label>
    <button class="tool" aria-label="Geometry"><svg><use href="#geo"/></svg></button>
    <button class="tool on" aria-label="Mesh"><svg><use href="#mod"/></svg></button>
    <button class="tool" aria-label="ParaViS"><svg><use href="#cube"/></svg></button>
    <button class="tool" aria-label="Calculator"><svg><use href="#calc"/></svg></button>
    <button class="tool" aria-label="YACS"><svg><use href="#flow"/></svg></button>
    <button class="tool" aria-label="Fields"><svg><use href="#rgb"/></svg></button>
  </div>
</div>
<div class="toolrow">
  <div class="group"><i class="grip"></i>
    <button class="tool" aria-label="Create mesh"><svg><use href="#m1"/></svg></button>
    <button class="tool" aria-label="Add sub-mesh"><svg><use href="#m2"/></svg></button>
    <button class="tool soft" aria-label="Edit mesh"><svg><use href="#m3"/></svg></button>
    <button class="tool" aria-label="Build compound"><svg><use href="#m4"/></svg></button>
    <button class="tool" aria-label="Copy mesh"><svg viewBox="0 0 20 20"><use href="#base"/><text x="3" y="20" class="x2">x2</text></svg></button>
    <i class="sep"></i>
    <button class="tool" aria-label="Compute"><svg><use href="#gear"/></svg></button>
    <button class="tool" aria-label="Preview"><svg><use href="#g2"/></svg></button>
    <button class="tool" aria-label="Order"><svg viewBox="0 0 20 20"><use href="#gear"/><text x="0" y="16" class="n123">123</text></svg></button>
    <button class="tool" aria-label="Evaluate"><svg><use href="#g4"/></svg></button>
  </div>
  <div class="group"><i class="grip"></i>
    <button class="tool" aria-label="Node"><svg><use href="#w0"/></svg></button>
    <button class="tool" aria-label="0D element"><svg viewBox="0 0 20 20"><path class="k" d="M4 14h0"/><text x="6" y="9" class="zd">0D</text></svg></button>
    <button class="tool" aria-label="0D on nodes"><svg viewBox="0 0 20 20"><path d="M3 8h9v8H3z" class="sel r1"/><path class="k" d="M1 11h0M10 13h0M5 18h0M7 10h0"/><path d="M5 0v6M2 3h6" stroke="#e01020" stroke-width="2"/><text x="8" y="7" class="zd">0D</text></svg></button>
    <button class="tool" aria-label="Ball"><svg><use href="#w3"/></svg></button>
    <button class="tool" aria-label="Edge"><svg><use href="#w4"/></svg></button>
    <button class="tool" aria-label="Triangle"><svg><use href="#w5"/></svg></button>
    <button class="tool" aria-label="Quadrangle"><svg><use href="#w6"/></svg></button>
    <button class="tool" aria-label="Polygon"><svg><use href="#w7"/></svg></button>
    <button class="tool" aria-label="Tetrahedron"><svg><use href="#w8"/></svg></button>
    <button class="tool" aria-label="Hexahedron"><svg><use href="#w9"/></svg></button>
    <button class="tool" aria-label="Pentahedron"><svg><use href="#w10"/></svg></button>
    <button class="tool" aria-label="Pyramid"><svg><use href="#w11"/></svg></button>
    <button class="tool" aria-label="Octahedron"><svg><use href="#w12"/></svg></button>
    <button class="tool" aria-label="Polyhedron"><svg><use href="#w13"/></svg></button>
  </div>
  <div class="group"><i class="grip"></i>
    <button class="tool" aria-label="Quadratic edge"><svg><use href="#q0"/></svg></button>
    <button class="tool" aria-label="Quadratic triangle"><svg><use href="#q1"/></svg></button>
    <button class="tool" aria-label="Biquadratic triangle"><svg><use href="#q2"/></svg></button>
    <button class="tool" aria-label="Quadratic quadrangle"><svg><use href="#q3"/></svg></button>
    <button class="tool" aria-label="Biquadratic quadrangle"><svg><use href="#q4"/></svg></button>
    <button class="tool" aria-label="Quadratic polygon"><svg><use href="#q5"/></svg></button>
    <button class="tool" aria-label="Quadratic tetrahedron"><svg><use href="#q6"/></svg></button>
    <button class="tool" aria-label="Quadratic pyramid"><svg><use href="#q7"/></svg></button>
    <button class="tool" aria-label="Quadratic pentahedron"><svg><use href="#q8"/></svg></button>
    <button class="tool" aria-label="Quadratic hexahedron"><svg><use href="#q9"/></svg></button>
    <button class="tool" aria-label="Triquadratic hexahedron"><svg><use href="#q10"/></svg></button>
  </div>
  <div class="group last"><i class="grip"></i>
    <button class="tool" aria-label="Clear node"><svg><use href="#b0"/></svg></button>
    <button class="tool" aria-label="Clear element"><svg><use href="#b1"/></svg></button>
    <button class="tool" aria-label="Clear orphan nodes"><svg><use href="#b2"/></svg></button>
    <button class="tool" aria-label="Clear mesh"><svg><use href="#b3"/></svg></button>
  </div>
</div>
<div class="toolrow">
  <div class="group"><i class="grip"></i>
    <button class="tool" aria-label="Mesh information"><svg><use href="#a1"/></svg></button>
    <button class="tool" aria-label="Find element"><svg><use href="#a2"/></svg></button>
  </div>
  <div class="group"><i class="grip"></i>
    <button class="tool" aria-label="Create group"><svg><use href="#s1"/></svg></button>
    <button class="tool" aria-label="Groups from geometry"><svg><use href="#s2"/></svg></button>
    <button class="tool" aria-label="New group"><svg><use href="#s3"/></svg></button>
    <button class="tool" aria-label="Edit group"><svg><use href="#s4"/></svg></button>
  </div>
  <div class="group"><i class="grip"></i>
    <button class="tool" aria-label="Translate"><svg><use href="#t1"/></svg></button>
    <button class="tool" aria-label="Rotate"><svg><use href="#t2"/></svg></button>
    <button class="tool" aria-label="Symmetry"><svg><use href="#t3"/></svg></button>
    <button class="tool" aria-label="Scale"><svg><use href="#t4"/></svg></button>
    <button class="tool" aria-label="Sewing"><svg><use href="#t5"/></svg></button>
    <button class="tool" aria-label="Merge nodes"><svg><use href="#t6"/></svg></button>
    <button class="tool" aria-label="Merge elements"><svg><use href="#t7"/></svg></button>
    <button class="tool" aria-label="Duplicate nodes"><svg><use href="#t8"/></svg></button>
  </div>
  <div class="group"><i class="grip"></i>
    <button class="tool" aria-label="Move node"><svg><use href="#e0"/></svg></button>
    <button class="tool" aria-label="Diagonal inversion"><svg><use href="#e1"/></svg></button>
    <button class="tool" aria-label="Union of triangles"><svg><use href="#e2"/></svg></button>
    <button class="tool" aria-label="Orientation"><svg><use href="#e3"/></svg></button>
    <button class="tool" aria-label="Reorient faces"><svg><use href="#e4"/></svg></button>
    <button class="tool" aria-label="Union of set"><svg><use href="#e5"/></svg></button>
    <button class="tool" aria-label="Cutting quadrangles"><svg><use href="#e6"/></svg></button>
    <button class="tool" aria-label="Split volumes"><svg><use href="#e7"/></svg></button>
    <button class="tool" aria-label="Extrusion"><svg><use href="#e8"/></svg></button>
    <button class="tool" aria-label="Revolution"><svg><use href="#e9"/></svg></button>
    <button class="tool" aria-label="Smoothing"><svg><use href="#e10"/></svg></button>
    <button class="tool" aria-label="Extrusion along path"><svg><use href="#e11"/></svg></button>
    <button class="tool" aria-label="Revolve"><svg><use href="#e12"/></svg></button>
    <button class="tool" aria-label="Pattern mapping"><svg><use href="#e13"/></svg></button>
    <button class="tool" aria-label="Convert"><svg><use href="#e14"/></svg></button>
    <button class="tool" aria-label="Boundary"><svg><use href="#e15"/></svg></button>
  </div>
  <div class="group"><i class="grip"></i>
    <button class="tool" aria-label="Minimum distance"><svg><use href="#z1"/></svg></button>
  </div>
  <div class="group last"><i class="grip"></i>
    <button class="tool" aria-label="Refresh"><svg><use href="#z2"/></svg></button>
  </div>
</div>

<div class="desk">
  <aside class="dock">
    <div class="docktitle"><span>Object Browser</span>
      <button aria-label="Float"><svg viewBox="0 0 10 10"><path d="M3 1h6v5H3zM1 4h5v5H1zM3 2h6M1 5h5" fill="none" stroke="#111" stroke-width="1.200"/></svg></button>
      <button aria-label="Close panel"><svg viewBox="0 0 10 10"><path d="M1 1l8 8M9 1L1 9" stroke="#111" stroke-width="1.700"/></svg></button>
    </div>
    <div class="treebox">
      <div class="treehead"><i></i><span>Name</span></div>
      <ul class="tree">
        <li><b class="ex open"></b><svg class="big"><use href="#geo"/></svg>Geometry</li>
        <li class="l1"><b class="ex"></b><svg><use href="#plus"/></svg>O</li>
        <li class="l1"><b class="ex"></b><svg><use href="#line"/></svg>OX</li>
        <li class="l1"><b class="ex"></b><svg><use href="#line"/></svg>OY</li>
        <li class="l1"><b class="ex"></b><svg><use href="#line"/></svg>OZ</li>
        <li class="l1"><b class="ex"></b><svg><use href="#face"/></svg>Disk_1</li>
        <li class="l1"><b class="ex"></b><svg><use href="#face"/></svg>Face_1</li>
        <li class="l1"><b class="ex open"></b><svg><use href="#face"/></svg>Cut_1</li>
        <li class="l2 bare ref"><b class="ex"></b>* Disk_1</li>
        <li class="l2 bare ref"><b class="ex"></b>* Face_1</li>
        <li class="l2"><b class="ex shut"></b><svg><use href="#grp"/></svg>Surface</li>
        <li class="l2"><b class="ex shut"></b><svg><use href="#grp"/></svg>Farfield</li>
        <li><b class="ex open"></b><svg class="big"><use href="#arrow"/></svg>Mesh</li>
        <li class="l1"><b class="ex shut"></b><svg><use href="#hyp"/></svg>Hypotheses</li>
        <li class="l1"><b class="ex shut"></b><svg><use href="#alg"/></svg>Algorithms</li>
        <li class="l1 picked"><b class="ex open"></b><svg><use href="#msh"/></svg>Mesh_1</li>
        <li class="l2 bare ref"><b class="ex"></b>* Cut_1</li>
        <li class="l2"><b class="ex shut"></b><svg><use href="#hyp"/></svg>Applied hypotheses</li>
        <li class="l2"><b class="ex shut"></b><svg><use href="#alg"/></svg>Applied algorithms</li>
        <li class="l2 bare"><b class="ex open"></b>SubMeshes on Edge</li>
        <li class="l3"><b class="ex shut"></b><svg><use href="#msh"/></svg>Sub-mesh_1</li>
      </ul>
      <div class="hscroll">
        <button aria-label="Scroll left"><svg viewBox="0 0 8 10"><path d="M6 1L2 5l4 4" fill="none" stroke="#444" stroke-width="2"/></svg></button>
        <i class="thumb"></i>
        <button aria-label="Scroll right"><svg viewBox="0 0 8 10"><path d="M2 1l4 4-4 4" fill="none" stroke="#444" stroke-width="2"/></svg></button>
      </div>
    </div>
  </aside>
  <main class="work">
    <div class="tabs">
      <button class="tab">OCC scene:2 - viewer:1</button><button class="tab active" aria-label="VTK scene:1 - viewer:1"></button>
      <button class="tabclose" aria-label="Close view"><svg viewBox="0 0 10 10"><path d="M1 1l8 8M9 1L1 9" stroke="#111" stroke-width="1.700"/></svg></button>
    </div>
    <div class="viewtools">
      <div class="group"><i class="grip"></i>
        <button class="tool" aria-label="Dump view"><svg><use href="#v1"/></svg></button>
        <button class="tool" aria-label="Interaction style"><svg><use href="#v2"/></svg></button>
        <button class="tool on" aria-label="Zooming style"><svg><use href="#v3"/></svg></button>
        <i class="sep"></i>
        <button class="tool on" aria-label="Preselection"><svg><use href="#v4"/></svg></button>
        <button class="tool" aria-label="Dynamic preselection"><svg><use href="#v5"/></svg></button>
        <button class="tool" aria-label="Disable preselection"><svg><use href="#v6"/></svg></button>
        <button class="tool on" aria-label="Enable selection"><svg><use href="#v7"/></svg></button>
        <i class="sep"></i>
        <button class="tool on" aria-label="Show trihedron"><svg><use href="#v8"/></svg></button>
        <button class="tool" aria-label="Fit all"><svg><use href="#v9"/></svg></button>
        <button class="tool" aria-label="Fit area"><svg><use href="#v10"/></svg></button>
        <i class="stretch"></i>
        <button class="tool" aria-label="Scaling"><svg><use href="#v11"/></svg></button>
        <button class="tool" aria-label="Graduated axes"><svg><use href="#v12"/></svg></button>
        <button class="tool" aria-label="View parameters"><svg><use href="#v13"/></svg></button>
        <button class="tool" aria-label="Synchronize"><svg><use href="#v14"/></svg></button>
        <button class="more" aria-label="More"><svg class="caret"><use href="#down"/></svg></button>
        <i class="sep"></i>
        <button class="tool on" aria-label="Parallel projection"><svg><use href="#v15"/></svg></button>
        <button class="tool" aria-label="Perspective"><svg><use href="#v16"/></svg></button>
        <button class="tool" aria-label="Stereo"><svg viewBox="0 0 20 20"><text x="4" y="7" class="td">3D</text><path d="M3 13q0-4 4-5M17 13q0-4-4-5M8 14h4" stroke="#555" fill="none"/><path d="M1 12h8q1 7-4 7t-4-7z" fill="#18b8d8" stroke="#444"/><path d="M11 12h8q1 7-4 7t-4-7z" fill="#e03038" stroke="#444"/></svg></button>
      </div>
      <div class="group last"><i class="grip"></i>
        <button class="tool" aria-label="Record"><svg><use href="#rec"/></svg></button>
        <button class="tool" aria-label="Play"><svg><use href="#play"/></svg></button>
        <button class="tool" aria-label="Pause"><svg><use href="#pause"/></svg></button>
        <button class="tool" aria-label="Stop"><svg><use href="#stop"/></svg></button>
      </div>
    </div>
    <div class="scene">
      <svg id="view">
        <path id="skin"/>
        <clipPath id="cut"><path id="rim"/></clipPath>
        <path id="edges" clip-path="url(#cut)"/>
        <g fill="none" stroke-width="1">
          <path d="M80 564V527" stroke="#0000c8"/><path d="M76 536l4-10 4 10z" fill="#0000e0"/>
          <path d="M80 564l27-15" stroke="#00c000"/><path d="M101 549l8-2-5 6z" fill="#00a000" stroke="#00a000"/>
          <path d="M80 564l32 17" stroke="#e00000"/><path d="M107 575l6 8-9-2z" fill="#f00000" stroke="#f00000"/>
        </g>
        <text x="81" y="532" fill="#0000ff">Z</text><text x="105" y="551" fill="#00e000">Y</text><text x="109" y="580" fill="#ff0000">X</text>
      </svg>
    </div>
  </main>
</div>

<section class="dialog" role="dialog" aria-labelledby="dlgtitle">
  <header class="dlgbar">
    <svg class="lamp"><use href="#lamp"/></svg>
    <h2 id="dlgtitle">Mesh computation succeed</h2>
    <div class="dlgbtns">
      <button class="dmin" aria-label="Minimize dialog"><svg viewBox="0 0 16 16"><path d="M1 13h14v2H1z" fill="#999"/></svg></button>
      <button class="dmax" aria-label="Maximize dialog"><svg viewBox="0 0 16 16"><path d="M0 2h16v12H0zM1 5v8h14V5z" fill-rule="evenodd"/></svg></button>
      <button class="dclose" aria-label="Close dialog"><svg viewBox="0 0 16 16"><path d="M3 4h3l2 3 2-3h3L9.500 8l3.500 4.500h-3L8 9.500 6 12.500H3L6.500 8z"/></svg></button>
    </div>
  </header>
  <div class="dlgbody">
    <fieldset class="compute"><legend>Compute mesh</legend>
      <label><input type="radio" name="op" checked aria-label="Compute"><svg><use href="#gear"/></svg></label>
    </fieldset>
    <fieldset class="name"><legend>Name</legend><span>Mesh_1</span></fieldset>
    <fieldset class="infos"><legend>Mesh Infos</legend>
      <table>
        <tr><th></th><td><em>Total</em></td><td><em>Linear</em></td><td><em>Quadratic</em></td><td><em>Bi-Quadratic</em></td></tr>
        <tr><th>Nodes :</th><td>61559</td><td></td><td></td><td></td></tr>
        <tr class="rule"><td><hr></td><td><hr></td><td><hr></td><td><hr></td><td><hr></td></tr>
        <tr><th>0D Elements :</th><td>0</td><td></td><td></td><td></td></tr>
        <tr class="rule"><td><hr></td><td><hr></td><td><hr></td><td><hr></td><td><hr></td></tr>
        <tr><th>Balls :</th><td>0</td><td></td><td></td><td></td></tr>
        <tr class="rule"><td><hr></td><td><hr></td><td><hr></td><td><hr></td><td><hr></td></tr>
        <tr><th>Edges :</th><td>8400</td><td>8400</td><td>0</td><td></td></tr>
        <tr class="rule"><td><hr></td><td><hr></td><td><hr></td><td><hr></td><td><hr></td></tr>
        <tr><th>Faces :</th><td>114718</td><td>114718</td><td>0</td><td>0</td></tr>
        <tr><td>Triangles :</td><td>114718</td><td>114718</td><td>0</td><td>0</td></tr>
        <tr><td>Quadrangles :</td><td>0</td><td>0</td><td>0</td><td>0</td></tr>
        <tr><td>Polygons :</td><td>0</td><td>0</td><td>0</td><td></td></tr>
        <tr class="rule"><td><hr></td><td><hr></td><td><hr></td><td><hr></td><td><hr></td></tr>
        <tr><th>Volumes :</th><td>0</td><td>0</td><td>0</td><td>0</td></tr>
        <tr><td>Tetrahedrons :</td><td>0</td><td>0</td><td>0</td><td></td></tr>
        <tr><td>Hexahedrons :</td><td>0</td><td>0</td><td>0</td><td>0</td></tr>
        <tr><td>Pyramids :</td><td>0</td><td>0</td><td>0</td><td></td></tr>
        <tr><td>Prisms :</td><td>0</td><td>0</td><td>0</td><td></td></tr>
        <tr><td>Hexagonal prisms :</td><td>0</td><td></td><td></td><td></td></tr>
        <tr><td>Polyhedrons :</td><td>0</td><td></td><td></td><td></td></tr>
      </table>
    </fieldset>
    <div class="actions"><button>Close</button><button>Help</button></div>
  </div>
</section>
<script src="mesh.js"></script>
</body>
</html>
```
FILE: mesh.js
```js
// Builds the triangulated plate between two circular arcs.
const TOP = 238, BOTTOM = 378, MID = 293, LEFT = 345, RIGHT = 1468;
const bow = y => 0.0026 * (y - MID) * (y - MID);

let rim = "";
for (let y = TOP; y <= BOTTOM; y += 5) rim += (rim ? "L" : "M") + (LEFT + bow(y)) + " " + y;
for (let y = BOTTOM; y >= TOP; y -= 5) rim += "L" + (RIGHT - bow(y)) + " " + y;
rim += "z";
document.getElementById("skin").setAttribute("d", rim);
document.getElementById("rim").setAttribute("d", rim);

const columns = [];
for (let x = LEFT; x < RIGHT + 30;) {
  columns.push(x);
  const t = (x - LEFT) / (RIGHT - LEFT);
  x += t < 0.5 ? 7 + 3 * t : 8.5 - 3 * (t - 0.5);
}
const ROW = 9;
const rows = Math.ceil((BOTTOM - TOP) / ROW) + 4;
function vertex(i, k) {
  const y0 = TOP - 14 + (k + (i % 2) / 2) * ROW;
  const t = (columns[i] - LEFT) / (RIGHT - LEFT);
  const pull = (1 - t) ** 3 * bow(y0) - t ** 3 * bow(y0);
  const wave = Math.sin(columns[i] / 47 + y0 / 31);
  const drift = Math.cos(columns[i] / 83 - y0 / 23);
  return [Math.round(columns[i] + pull + 3 * wave), Math.round(y0 + 3 * drift + 2 * wave)];
}
let d = "";
for (let i = 0; i < columns.length - 1; i++) {
  for (let k = 0; k < rows; k++) {
    const p = vertex(i, k), q = vertex(i + 1, k);
    d += "M" + p + "L" + vertex(i, k + 1) + "M" + p + "L" + q;
    if (i % 2) d += "M" + p + "L" + vertex(i + 1, k + 1);
    else if (k) d += "M" + p + "L" + vertex(i + 1, k - 1);
  }
}
document.getElementById("edges").setAttribute("d", d);
```
FILE: styles.css
```css
* { box-sizing: border-box; }
body {
  margin: 0;
  height: 100vh;
  display: flex;
  flex-direction: column;
  overflow: hidden;
  position: relative;
  background: #f0f0f0;
  color: #000;
  font: 12px "DejaVu Sans Condensed", "DejaVu Sans", sans-serif;
}
button { border: 0; background: none; padding: 0; margin: 0; font: inherit; color: inherit; }
h1, h2 { margin: 0; font: 18px "Open Sans", sans-serif; color: #333; }
.defs { position: absolute; width: 0; height: 0; }
.w { fill: none; stroke: #4c48c0; stroke-width: 1.2; }
.k { fill: none; stroke: #000; stroke-width: 2; stroke-linecap: square; }
.r { fill: none; stroke: #f01010; stroke-width: 2; stroke-linecap: square; }
.sel { fill: none; stroke-dasharray: 3 2; }
.r1 { stroke: #e01020; }
.b1 { stroke: #2038b0; }
.gridl { fill: none; stroke: #0c1828; stroke-width: 1; }
.x2 { font: bold 13px "DejaVu Sans Condensed", sans-serif; fill: #d02828; }
.n123 { font: bold 10px "DejaVu Sans Condensed", sans-serif; fill: #f4f020; }
.zd { font: bold 9px "DejaVu Sans Condensed", sans-serif; fill: #2058d0; }
.td { font: 9px "Liberation Sans", sans-serif; fill: #222; }

.titlebar { flex: none; height: 29px; display: flex; align-items: flex-start; background: #ebebeb; border-bottom: 1px solid #d6d6d6; }
.lamp { width: 20px; height: 12px; }
.titlebar .lamp { margin: 8px 0 0 2px; }
.titlebar h1 { flex: 1; text-align: center; line-height: 30px; padding-left: 109px; }
.winbtns { display: flex; width: 129px; height: 25px; }
.winbtns svg, .dlgbtns svg { width: 15px; height: 16px; display: block; fill: #222; margin: 0 auto; }
.wmin { width: 38px; }
.wmax { width: 35px; }
.winbtns .wclose { flex: 1; background: #bcbcbc; }
.winbtns .wclose svg, .dlgbtns .dclose svg { fill: #fff; }

.menubar { flex: none; height: 26px; display: flex; align-items: center; background: #f5f6f7; border-bottom: 1px solid #e3e3e3; padding-left: 8px; gap: 17px; font: 14px "Open Sans", sans-serif; color: #9a9a9a; overflow: hidden; }
.logo { margin-left: auto; padding-right: 2px; white-space: nowrap; font: bold 23px/20px "DejaVu Sans", sans-serif; font-size: 23px; color: #bdbdbd; text-shadow: 1px 1px 0 #222; }

.toolrow { flex: none; height: 40px; display: flex; border-bottom: 1px solid #b4b4b4; border-top: 1px solid #fff; }
.group { display: flex; align-items: center; padding-right: 2px; border-right: 1px solid #b4b4b4; }
.group.last { border-right: 0; }
.grip { width: 11px; height: 32px; flex: none; background: radial-gradient(circle at 5px 3px, #aaa 1px, transparent 2px) 0 0 / 11px 6px; }
.sep { width: 7px; height: 30px; flex: none; background: linear-gradient(90deg, transparent 3px, #cdcdcd 3px 4px, transparent 4px); }
.tool { width: 37px; height: 36px; flex: none; display: grid; place-items: center; border: 1px solid transparent; }
.tool svg { width: 20px; height: 20px; overflow: visible; filter: drop-shadow(1px 1px 1px rgba(0, 0, 0, .4)); }
.tool.on { background: #b2d3f3; border-color: #5ba0e0; }
.tool.soft { background: #d0e2f3; border-color: #74a9e6; }
.combo { width: 112px; height: 26px; margin: 0 0 0 1px; display: flex; align-items: center; border: 1px solid #aaa; background: linear-gradient(#efefef, #e4e4e4); padding: 0 5px 0 6px; }
.combo svg { width: 20px; height: 18px; flex: none; }
.combo select { flex: 1; min-width: 0; appearance: none; border: 0; background: none; font: inherit; padding: 0 0 2px 1px; color: #000; }
.combo .caret, .more .caret { width: 8px; height: 5px; }

.desk { flex: 1; min-height: 0; display: flex; gap: 6px; }
.dock { width: 256px; flex: none; display: flex; flex-direction: column; gap: 2px; padding-bottom: 1px; }
.docktitle { height: 24px; flex: none; display: flex; align-items: center; gap: 7px; background: #dadada; border: 1px solid #bcbcbc; padding: 0 3px 0 4px; font-size: 13px; }
.docktitle span { flex: 1; }
.docktitle svg { width: 10px; height: 10px; display: block; }
.treebox { flex: 1; min-height: 0; display: flex; flex-direction: column; background: #fff; border: 1px solid #828790; border-bottom: 0; font: 14px "Open Sans", sans-serif; }
.treehead { height: 29px; flex: none; display: flex; align-items: center; border-bottom: 1px solid #e0ecf8; background: #fcfcfc; }
.treehead i { width: 16px; align-self: stretch; border-right: 1px solid #e0ecf8; }
.treehead span { flex: 1; text-align: center; }
.tree { flex: 1; margin: 0; padding: 0; list-style: none; overflow: hidden; }
.tree li { height: 21px; display: flex; align-items: center; padding-left: 22px; white-space: nowrap; }
.tree .l1 { padding-left: 46px; }
.tree .l2 { padding-left: 71px; }
.tree .l3 { padding-left: 96px; }
.tree svg { width: 14px; height: 14px; margin: 0 6px 0 7px; flex: none; }
.tree .big { width: 16px; height: 16px; margin: 0 5px 0 7px; }
.ex { width: 16px; height: 12px; flex: none; }
.bare .ex { margin-right: 7px; }
.bare.ref .ex { margin-right: 6px; }
.ex.open { background: #333; clip-path: polygon(12px 1px, 12px 10px, 4px 10px); }
.ex.shut { position: relative; }
.ex.shut::before { content: ""; position: absolute; inset: 0 3px 0 5px; background: #999; clip-path: polygon(0 0, 100% 50%, 0 100%); }
.ex.shut::after { content: ""; position: absolute; inset: 2px 5px 2px 6px; background: #fff; clip-path: polygon(0 0, 100% 50%, 0 100%); }
.ref { color: #f00; }
.tree .picked { color: #fff; background: linear-gradient(90deg, #39f 16px, #fff 16px 66px, #39f 66px); }
.hscroll { height: 20px; flex: none; display: flex; background: #f0f0f0; }
.hscroll button { width: 20px; display: grid; place-items: center; }
.hscroll svg { width: 8px; height: 10px; }
.thumb { flex: 1; margin-left: 24px; background: #cdcdcd; }

.work { flex: 1; min-width: 0; display: flex; flex-direction: column; border-left: 2px solid #a0a0a0; border-top: 2px solid #a0a0a0; }
.tabs { height: 25px; flex: none; display: flex; align-items: flex-end; padding: 0 0 0 2px; background: linear-gradient(#a0a0a0, #a0a0a0) 0 100% / calc(100% - 18px) 1px no-repeat; }
.tab { width: 538px; height: 22px; border: 1px solid #a0a0a0; background: linear-gradient(#f0f0f0, #e4e4e4); font-size: 13px; }
.tab.active { width: 547px; height: 25px; background: #fff; border-bottom: 0; }
.tabclose { margin-left: auto; align-self: center; width: 10px; }
.tabclose svg { width: 9px; height: 9px; display: block; }
.viewtools { height: 40px; flex: none; display: flex; padding-left: 1px; border-top: 1px solid #fff; border-bottom: 1px solid #b4b4b4; }
.stretch { width: 593px; flex: none; }
.more { width: 13px; }

.scene { flex: 1; min-height: 0; background: #000; }
#view { width: 100%; height: 100%; display: block; }
#view text { font: 14px "Liberation Sans", sans-serif; }
#skin { fill: #00679c; }
#edges { fill: none; stroke: #eef6fb; stroke-width: 1; shape-rendering: crispEdges; }

.dialog { position: absolute; left: 656px; top: 178px; width: 608px; background: #fbfbfb; border: 1px solid #b8b8b8; padding: 0 7px 8px; }
.dlgbar { height: 36px; display: flex; align-items: flex-start; }
.dlgbar .lamp { margin: 13px 0 0 3px; }
.dlgbar h2 { flex: 1; text-align: center; line-height: 36px; padding-left: 93px; }
.dlgbtns { display: flex; width: 117px; height: 26px; }
.dmin { width: 34px; }
.dmax { width: 25px; padding-bottom: 2px; }
.dlgbtns .dclose { flex: 1; background: #c75050; }
.dlgbody { background: #f0f0f0; border: 1px solid #d2d2d2; padding: 16px 6px 5px; display: flex; flex-direction: column; gap: 6px; }
fieldset { margin: 0 10px; border: 1px solid #dcdcdc; padding: 0 11px; min-width: 0; }
legend { padding: 0 3px; margin-left: -5px; height: 16px; line-height: 16px; }
.compute { height: 64px; }
.compute label { display: flex; align-items: center; gap: 7px; height: 46px; }
.compute svg { width: 21px; height: 20px; }
.compute input { appearance: none; width: 16px; height: 16px; margin: 0; border: 1px solid #707070; border-radius: 50%; background: radial-gradient(#222 4px, #fff 5px); }
.name { height: 56px; line-height: 41px; }
.infos { height: 430px; }
table { width: 100%; margin-top: 9px; border-collapse: collapse; table-layout: fixed; }
tr { height: 22px; }
th, td { padding: 0 6px 0 0; text-align: left; width: 106px; white-space: nowrap; line-height: 22px; }
tr > :first-child { width: 116px; }
tr > :last-child { padding-right: 0; width: auto; }
.rule { height: 9px; }
.rule td { line-height: 0; }
hr { margin: 3px 0 4px; border: 0; height: 2px; background: #a0a0a0; border-bottom: 1px solid #fff; }
.actions { display: flex; justify-content: flex-end; gap: 7px; margin-top: 11px; }
.actions button { width: 91px; height: 26px; border: 1px solid #acacac; background: linear-gradient(#f0f0f0, #e5e5e5); }
```
